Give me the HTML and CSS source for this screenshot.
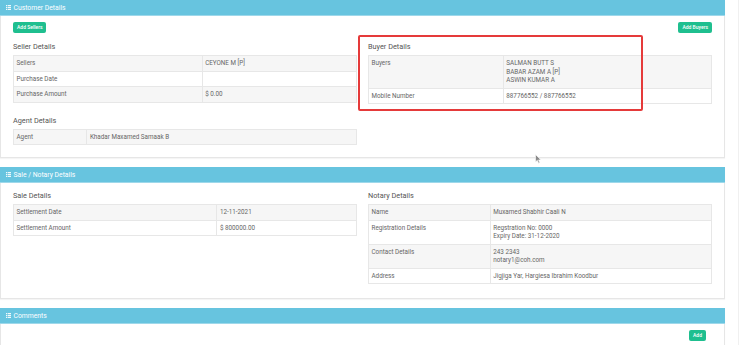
FILE: index.html
```html
<!DOCTYPE html>
<html>
<head>
<meta charset="utf-8">
<link rel="stylesheet" href="styles.css">
</head>
<body>
<div class="page">
  <section class="panel">
    <div class="panel-heading">
      <svg class="ico" viewBox="0 0 5 5" width="5" height="5"><rect x="0" y="0" width="1.4" height="1.2"/><rect x="2" y="0" width="3" height="1.2"/><rect x="0" y="1.9" width="1.4" height="1.2"/><rect x="2" y="1.9" width="3" height="1.2"/><rect x="0" y="3.8" width="1.4" height="1.2"/><rect x="2" y="3.8" width="3" height="1.2"/></svg>
      <span>Customer Details</span>
    </div>
    <div class="panel-body cust">
      <div class="col">
        <div class="btn-row"><button class="btn">Add Sellers</button></div>
        <h4 class="sub">Seller Details</h4>
        <table class="tbl c-seller">
          <tr><td>Sellers</td><td>CEYONE M [P]</td></tr>
          <tr><td>Purchase Date</td><td></td></tr>
          <tr><td>Purchase Amount</td><td>$ 0.00</td></tr>
        </table>
        <h4 class="sub agent">Agent Details</h4>
        <table class="tbl c-agent">
          <tr><td>Agent</td><td>Khadar Maxamed Samaak B</td></tr>
        </table>
      </div>
      <div class="col">
        <div class="btn-row right"><button class="btn">Add Buyers</button></div>
        <h4 class="sub">Buyer Details</h4>
        <table class="tbl c-buyer">
          <tr><td>Buyers</td><td>SALMAN BUTT S<br>BABAR AZAM A [P]<br>ASWIN KUMAR A</td></tr>
          <tr><td>Mobile Number</td><td>887766552 / 887766552</td></tr>
        </table>
      </div>
      <div class="highlight"></div>
      <svg class="cursor" viewBox="0 0 7 10" width="7" height="10"><path d="M0.5 0.5 L0.5 8 L2.3 6.3 L3.6 9.2 L4.8 8.7 L3.6 5.9 L6 5.9 Z" fill="#8a8a8a" stroke="#fff" stroke-width="0.6"/></svg>
    </div>
  </section>

  <section class="panel">
    <div class="panel-heading">
      <svg class="ico" viewBox="0 0 5 5" width="5" height="5"><rect x="0" y="0" width="1.4" height="1.2"/><rect x="2" y="0" width="3" height="1.2"/><rect x="0" y="1.9" width="1.4" height="1.2"/><rect x="2" y="1.9" width="3" height="1.2"/><rect x="0" y="3.8" width="1.4" height="1.2"/><rect x="2" y="3.8" width="3" height="1.2"/></svg>
      <span>Sale / Notary Details</span>
    </div>
    <div class="panel-body sale">
      <div class="col">
        <h4 class="sub">Sale Details</h4>
        <table class="tbl c-sale">
          <tr><td>Settlement Date</td><td>12-11-2021</td></tr>
          <tr><td>Settlement Amount</td><td>$ 800000.00</td></tr>
        </table>
      </div>
      <div class="col">
        <h4 class="sub">Notary Details</h4>
        <table class="tbl c-notary">
          <tr><td>Name</td><td>Muxamed Shabhir Caali N</td></tr>
          <tr><td>Registration Details</td><td>Regstration No: 0000<br>Expiry Date: 31-12-2020</td></tr>
          <tr><td>Contact Details</td><td>243 2343<br>notary1@coh.com</td></tr>
          <tr><td>Address</td><td>Jigjiga Yar, Hargiesa Ibrahim Koodbur</td></tr>
        </table>
      </div>
    </div>
  </section>

  <section class="panel last">
    <div class="panel-heading">
      <svg class="ico" viewBox="0 0 5 5" width="5" height="5"><rect x="0" y="0" width="1.4" height="1.2"/><rect x="2" y="0" width="3" height="1.2"/><rect x="0" y="1.9" width="1.4" height="1.2"/><rect x="2" y="1.9" width="3" height="1.2"/><rect x="0" y="3.8" width="1.4" height="1.2"/><rect x="2" y="3.8" width="3" height="1.2"/></svg>
      <span>Comments</span>
    </div>
    <div class="panel-body comments">
      <button class="btn">Add</button>
    </div>
  </section>
</div>
</body>
</html>
```
FILE: styles.css
```css
* { box-sizing: border-box; }
html, body { margin: 0; padding: 0; background: #fff; }
body {
  font-family: Roboto, "Liberation Sans", sans-serif;
  color: #666;
  width: 739px;
  height: 345px;
  overflow: hidden;
}
.page {
  width: 739px;
  border-right: 1px solid #f0f0f0;
  padding-right: 13px;
  min-height: 345px;
}
.panel {
  width: 725px;
  border: 1px solid #e6e6e6;
  border-top: 0;
  box-shadow: 0 1px 1px rgba(0,0,0,0.04);
  margin-bottom: 9px;
  background: #fff;
}
.panel-heading {
  height: 16px;
  background: #67c4df;
  border-bottom: 1px solid #9ed8ea;
  color: #fff;
  font-size: 6.8px;
  display: flex;
  align-items: center;
  padding-left: 6px;
  margin: 0 -1px;
}
.panel-heading .ico { fill: #fff; margin-right: 2.5px; opacity: 0.9; }
.panel-body {
  position: relative;
  display: flex;
  gap: 11px;
  padding: 6px 12px 12px 12px;
}
.col { flex: 1 1 0; min-width: 0; }
.btn-row { display: flex; }
.btn-row.right { justify-content: flex-end; }
.btn {
  background: #1fbf8f;
  color: #fff;
  border: 0;
  border-radius: 2px;
  font-family: Roboto, "Liberation Sans", sans-serif;
  font-size: 5px;
  font-weight: 500;
  height: 11px;
  padding: 0 4px;
  line-height: 11px;
}
.sub {
  margin: 9px 0 3px;
  font-size: 7.3px;
  font-weight: 400;
  line-height: 10px;
  color: #555;
}
.sub.agent { margin-top: 13px; }
.tbl {
  width: 100%;
  border-collapse: collapse;
  table-layout: fixed;
  border: 1px solid #e7e7e7;
  font-size: 6.3px;
  color: #666;
}
.tbl td {
  border: 1px solid #e7e7e7;
  padding: 3px 3px 3px 2.5px;
  line-height: 8.5px;
  height: 15.5px;
  vertical-align: top;
}
.tbl tr:nth-child(odd) td { background: #f6f6f6; }
.c-seller td:first-child { width: 55%; }
.c-agent td:first-child { width: 21.4%; }
.c-buyer td:first-child { width: 39.3%; }
.c-sale td:first-child { width: 59.3%; }
.c-notary td:first-child { width: 35.5%; }
.sale { padding: 8px 12px 14px 12px; }
.sale .sub { margin-top: 0; }
.comments { padding: 6px 18px 14px 12px; justify-content: flex-end; }
.highlight {
  position: absolute;
  left: 357px;
  top: 19px;
  width: 285px;
  height: 76px;
  border: 2px solid #e53a3a;
  border-radius: 2px;
  pointer-events: none;
}
.cursor {
  position: absolute;
  left: 534px;
  top: 138px;
}
```
